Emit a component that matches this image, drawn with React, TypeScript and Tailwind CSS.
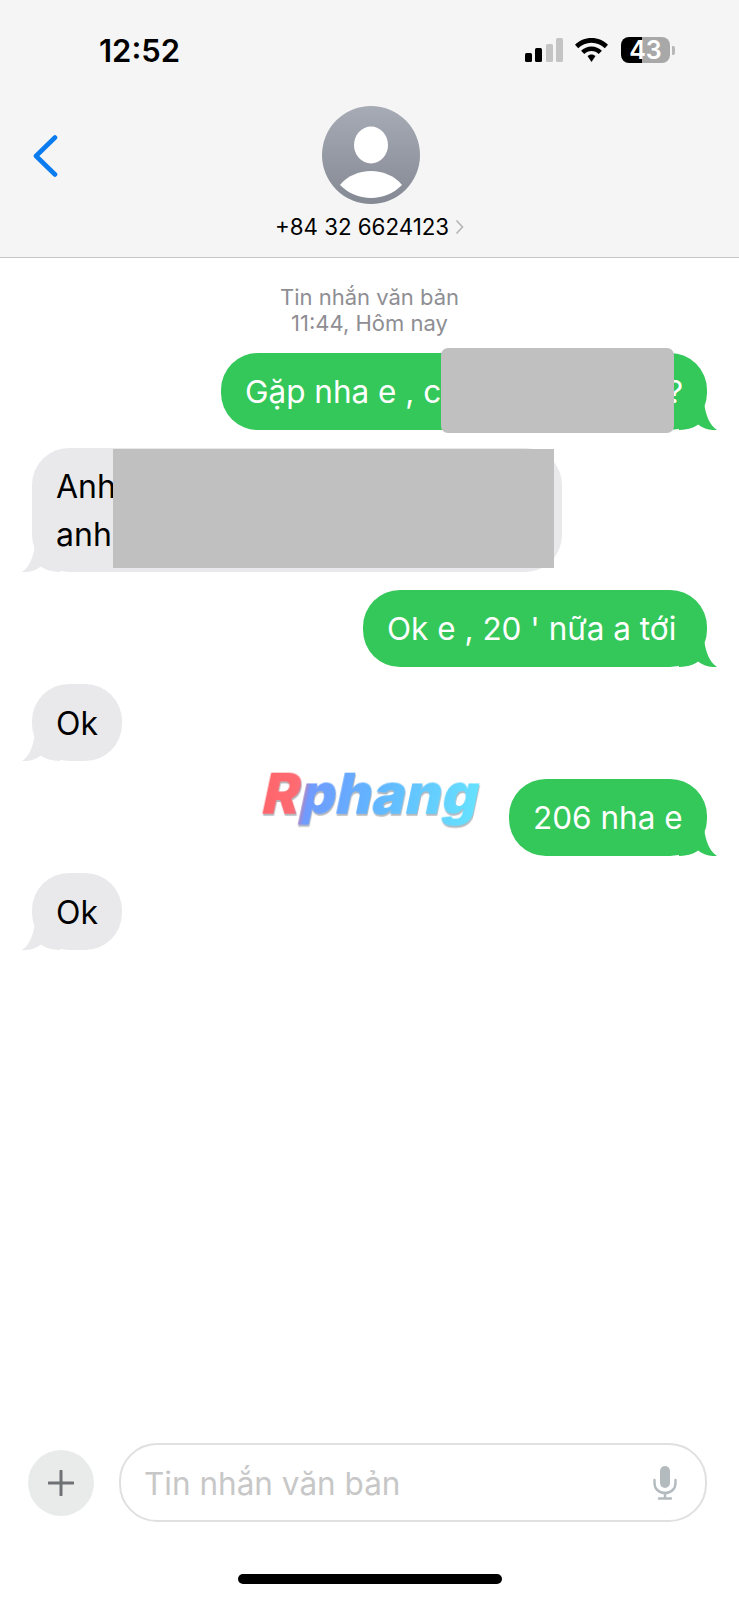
const FONT = "font-['Inter','Liberation_Sans',sans-serif]";

function Tail({ side, color }: { side: 'left' | 'right'; color: string }) {
  return (
    <svg
      viewBox="-14 0 38 24"
      width="38"
      height="24"
      className={`absolute bottom-0 ${side === 'right' ? '-right-[10px]' : '-left-[10px] -scale-x-100'}`}
    >
      <path d="M-14 0 L11.5 0 C13 8 16 19 24 24 C18 24.5 11 23 5 18.5 C2 21 -3 23.5 -14 24 Z" fill={color} />
    </svg>
  );
}

function Sent({ children, w }: { children: React.ReactNode; w: string }) {
  return (
    <div className={`relative h-[77px] rounded-[37px] bg-[#34c759] pl-[24px] pr-[24px] pt-[1px] flex items-center text-white text-[31.5px] whitespace-nowrap ${w}`}>
      {children}
      <Tail side="right" color="#34c759" />
    </div>
  );
}

function Received({ children }: { children: React.ReactNode }) {
  return (
    <div className="relative self-start h-[77px] w-[90px] rounded-[37px] bg-[#e9e9eb] px-[24px] pt-[2px] flex items-center text-black text-[32px]">
      {children}
      <Tail side="left" color="#e9e9eb" />
    </div>
  );
}

function StatusIcons() {
  return (
    <div className="flex items-center">
      <svg width="38" height="24" viewBox="0 0 38 24" className="mr-[12px]">
        <rect x="0" y="15" width="7" height="9" rx="1.5" fill="#000" />
        <rect x="10" y="10" width="7" height="14" rx="1.5" fill="#000" />
        <rect x="21" y="6" width="7" height="18" rx="1.5" fill="#c4c4c4" />
        <rect x="31" y="0" width="7" height="24" rx="1.5" fill="#c4c4c4" />
      </svg>
      <svg width="33" height="24" viewBox="0 0 33 24" className="mr-[13px]">
        <path d="M16.5 0 C23 0 28.8 2.6 33 6.8 L29.8 10.2 C26.4 6.8 21.7 4.7 16.5 4.7 C11.3 4.7 6.6 6.8 3.2 10.2 L0 6.8 C4.2 2.6 10 0 16.5 0 Z" fill="#000" />
        <path d="M16.5 8.4 C20.6 8.4 24.2 10 26.9 12.7 L23.7 16 C21.8 14.2 19.3 13 16.5 13 C13.7 13 11.2 14.2 9.3 16 L6.1 12.7 C8.8 10 12.4 8.4 16.5 8.4 Z" fill="#000" />
        <path d="M16.5 16.4 C18 16.4 19.4 17 20.5 18 L16.5 24 L12.5 18 C13.6 17 15 16.4 16.5 16.4 Z" fill="#000" />
      </svg>
      <div className="flex items-center">
        <div className="w-[49px] h-[26px] rounded-[8px] bg-[linear-gradient(90deg,#000_43%,#a8a8a8_43%)] flex items-center justify-center text-white text-[25px] font-semibold leading-none">
          43
        </div>
        <div className="ml-[2px] w-[3px] h-[9px] rounded-r-[2px] bg-[#b8b8b8]" />
      </div>
    </div>
  );
}

export default function App() {
  return (
    <div className={`${FONT} w-[739px] h-[1600px] bg-white flex flex-col overflow-hidden`}>
      {/* Header */}
      <header className="h-[258px] shrink-0 bg-[#f5f5f5] border-b border-[#c6c6c8] flex flex-col">
        <div className="flex items-center justify-between pl-[99px] pr-[64px] pt-[34px] h-[66px]">
          <span className="text-[31px] font-semibold text-black leading-none">12:52</span>
          <StatusIcons />
        </div>
        <div className="grid grid-cols-[1fr_auto_1fr] mt-[40px]">
          <div className="pl-[33px] pt-[29px]">
            <svg width="25" height="42" viewBox="0 0 25 42" fill="none">
              <path d="M22 2.5 L3 21 L22 39.5" stroke="#0a7cf0" strokeWidth="4.6" strokeLinecap="round" strokeLinejoin="round" />
            </svg>
          </div>
          <div className="flex flex-col items-center">
            <svg width="98" height="98" viewBox="0 0 98 98" className="ml-[3px]">
              <defs>
                <linearGradient id="avatar" x1="0" y1="0" x2="0" y2="1">
                  <stop offset="0" stopColor="#a6abb6" />
                  <stop offset="1" stopColor="#858993" />
                </linearGradient>
              </defs>
              <circle cx="49" cy="49" r="49" fill="url(#avatar)" />
              <ellipse cx="49" cy="39" rx="17" ry="18.5" fill="#fff" />
              <path d="M18 79 C25 70 37 65 49 65 C61 65 73 70 80 79 C72 87 61 92 49 92 C37 92 26 87 18 79 Z" fill="#fff" />
            </svg>
            <div className="mt-[10px] flex items-center text-[22.3px] leading-[26px] text-black whitespace-nowrap">
              +84 32 6624123
              <svg width="9" height="16" viewBox="0 0 9 16" fill="none" className="ml-[6px]">
                <path d="M1.5 1.5 L7.5 8 L1.5 14.5" stroke="#b5b5b8" strokeWidth="1.6" />
              </svg>
            </div>
          </div>
          <div />
        </div>
      </header>

      {/* Messages */}
      <main className="flex-1 flex flex-col pl-[32px] pr-[32px]">
        <div className="mt-[26px] text-center text-[22px] leading-[26px] text-[#8e8e93]">
          <div>Tin nhắn văn bản</div>
          <div>11:44, Hôm nay</div>
        </div>

        <div className="mt-[17px] self-end">
          <Sent w="w-[486px] justify-between">
            <span>Gặp nha e , c</span>
            <span>?</span>
            <div className="absolute left-[220px] -top-[5px] w-[233px] h-[85px] rounded-[7px] bg-[#c0c0c0]" />
          </Sent>
        </div>

        <div className="relative mt-[18px] self-start w-[530px] h-[124px] rounded-[37px] bg-[#e9e9eb] px-[24px] pt-[2px] flex flex-col justify-center text-black text-[32px] leading-[48px]">
          <div>Anh</div>
          <div>anh</div>
          <Tail side="left" color="#e9e9eb" />
          <div className="absolute left-[81px] top-[1px] w-[441px] h-[119px] bg-[#c0c0c0]" />
        </div>

        <div className="mt-[18px] self-end">
          <Sent w="w-[344px]">Ok e , 20 ' nữa a tới</Sent>
        </div>

        <div className="mt-[17px] flex flex-col">
          <Received>Ok</Received>
        </div>

        <div className="mt-[18px] flex items-start justify-end">
          <span className="mr-[29px] -mt-[21px] font-black text-[56px] leading-[72px] -skew-x-12 text-transparent bg-clip-text bg-[linear-gradient(90deg,#ff666c_0%,#ff6b72_15%,#6f9bff_21%,#62b4ff_50%,#66e2ff_100%)] [filter:drop-shadow(1px_2px_0_rgba(90,100,110,0.45))]">
            Rphang
          </span>
          <Sent w="w-[198px]">206 nha e</Sent>
        </div>

        <div className="mt-[17px] flex flex-col">
          <Received>Ok</Received>
        </div>
      </main>

      {/* Input bar */}
      <footer className="shrink-0 h-[157px] flex flex-col">
        <div className="flex items-center pl-[28px] pr-[32px]">
          <div className="w-[66px] h-[66px] rounded-full bg-[#e9ebeb] flex items-center justify-center">
            <svg width="26" height="26" viewBox="0 0 26 26" fill="none">
              <path d="M13 1 V25 M1 13 H25" stroke="#6e7275" strokeWidth="3" strokeLinecap="round" />
            </svg>
          </div>
          <div className="ml-[25px] flex-1 h-[79px] rounded-[38px] border-2 border-[#e0e0e0] flex items-center justify-between pl-[23px] pr-[28px]">
            <span className="pt-[2px] text-[31.5px] text-[#c7c7c7]">Tin nhắn văn bản</span>
            <svg width="24" height="34" viewBox="0 0 24 34" fill="none">
              <rect x="7" y="0" width="10" height="22" rx="5" fill="#b4bbbf" />
              <path d="M1.5 14 V17 C1.5 23 6 27 12 27 C18 27 22.5 23 22.5 17 V14" stroke="#b4bbbf" strokeWidth="2.4" strokeLinecap="round" />
              <path d="M12 27 V32.5 M6 32.5 H18" stroke="#b4bbbf" strokeWidth="2.4" strokeLinecap="round" />
            </svg>
          </div>
        </div>
        <div className="mt-[52px] mx-auto w-[264px] h-[10px] rounded-full bg-black" />
      </footer>
    </div>
  );
}
